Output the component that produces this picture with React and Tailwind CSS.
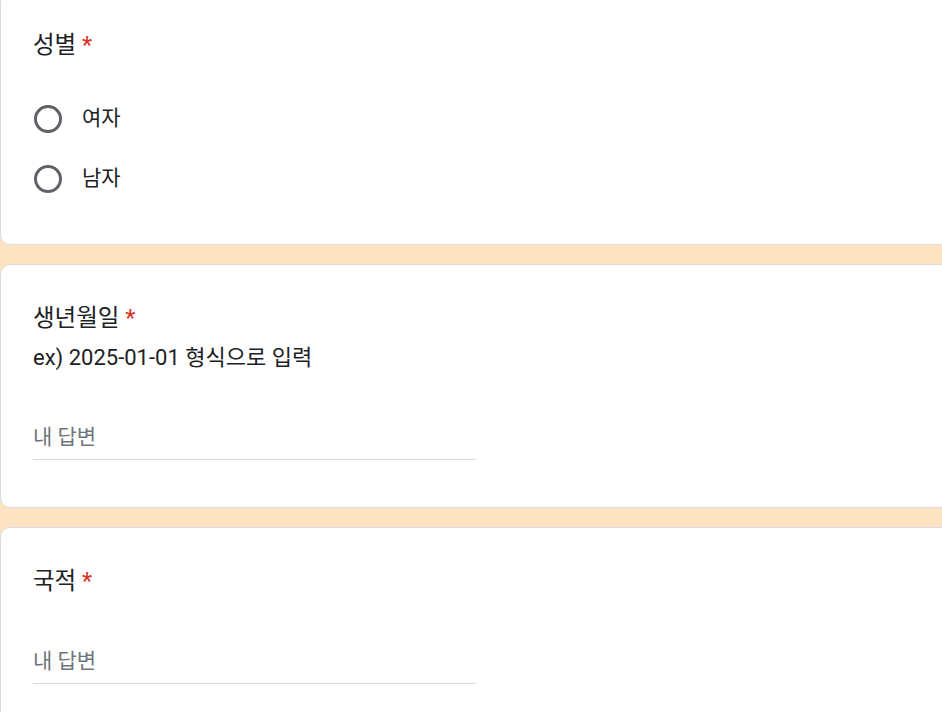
import React from 'react'

const font = { fontFamily: 'Roboto, "Noto Sans CJK KR", sans-serif' }

const Title = ({ children }) => (
  <div className="text-[23.5px] leading-[32px] text-[#202124]">
    {children} <span className="text-[#d93025]">*</span>
  </div>
)

const Radio = ({ label }) => (
  <div className="flex items-center h-[60px]">
    <div className="ml-[1px] w-[28px] h-[28px] rounded-full border-[3px] border-[#5f6368]"></div>
    <span className="ml-[20px] text-[21px] text-[#202124]">{label}</span>
  </div>
)

const AnswerInput = ({ className }) => (
  <div className={`w-[443px] border-b border-[#dadce0] pb-[8px] ${className}`}>
    <span className="text-[21px] leading-[26px] text-[#70757a]">내 답변</span>
  </div>
)

const Card = ({ className, children }) => (
  <div className={`bg-white border border-[#dadce0] rounded-[10px] pl-[32px] pt-[37px] ${className}`}>
    {children}
  </div>
)

export default function App() {
  return (
    <div className="w-[942px] h-[712px] overflow-hidden bg-[#fde3c2]" style={font}>
      <div className="w-[1000px] -mt-[9px] flex flex-col gap-[19px]">
        <Card className="pb-[35px]">
          <Title>성별</Title>
          <div className="mt-[28px] flex flex-col">
            <Radio label="여자" />
            <Radio label="남자" />
          </div>
        </Card>
        <Card className="pb-[47px]">
          <Title>생년월일</Title>
          <div className="mt-[11px] text-[22px] leading-[26px] text-[#202124]">ex) 2025-01-01 형식으로 입력</div>
          <AnswerInput className="mt-[53px]" />
        </Card>
        <Card className="pb-[48px]">
          <Title>국적</Title>
          <AnswerInput className="mt-[51px]" />
        </Card>
      </div>
    </div>
  )
}
